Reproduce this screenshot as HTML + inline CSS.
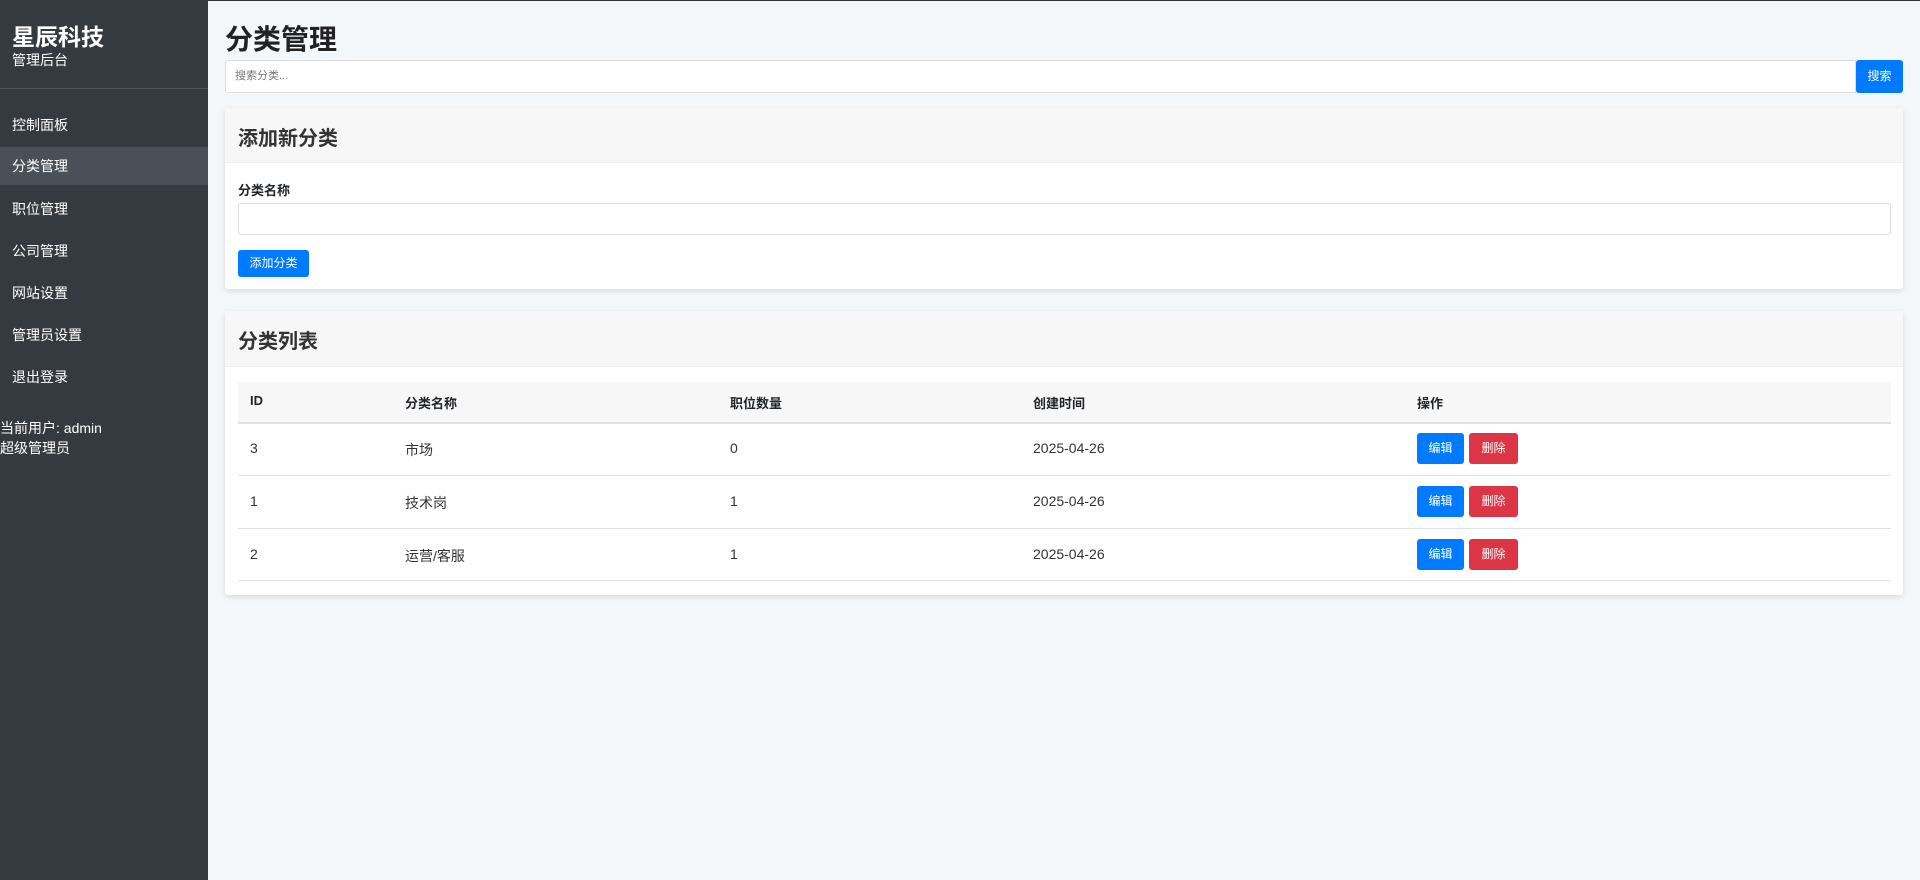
<!DOCTYPE html>
<html><head><meta charset="utf-8"><style>
*{box-sizing:border-box;margin:0;padding:0}
body{width:1920px;height:880px;background:#f4f7fa;font-family:"Liberation Sans","Noto Sans CJK SC",sans-serif;color:#212529;position:relative;overflow:hidden}
.a{position:absolute}
.side{left:0;top:0;width:208px;height:880px;background:#343a40;color:#fff}
.nav{left:0;width:208px;height:38px;line-height:38px;padding-left:12px;font-size:14px;color:#fff}
.btn{color:#fff;font-size:12px;text-align:center;border-radius:3px}
.card{background:#fff;box-shadow:0 2px 6px rgba(0,0,0,.12);border-radius:3px}
.hd{background:#f7f7f7;border-bottom:1px solid #eee}
.th{font-size:13px;font-weight:bold;top:393px}
.td{font-size:14px;color:#333}
.line{left:238px;width:1653px;height:1px;background:#dee2e6}
</style></head><body>
<div class="a side">
 <div class="a" style="left:12px;top:18px;font-size:23px;font-weight:bold">星辰科技</div>
 <div class="a" style="left:12px;top:50px;font-size:14px">管理后台</div>
 <div class="a" style="left:0;top:88px;width:208px;height:1px;background:#4b5259"></div>
 <div class="a nav" style="top:106px">控制面板</div>
 <div class="a nav" style="top:147px;background:#495057">分类管理</div>
 <div class="a nav" style="top:190px">职位管理</div>
 <div class="a nav" style="top:232px">公司管理</div>
 <div class="a nav" style="top:274px">网站设置</div>
 <div class="a nav" style="top:316px">管理员设置</div>
 <div class="a nav" style="top:358px">退出登录</div>
 <div class="a" style="left:0;top:418px;font-size:14px;line-height:20px">当前用户: admin<br>超级管理员</div>
</div>
<div class="a" style="left:208px;top:0;width:1712px;height:1px;background:#333"></div>
<div class="a" style="left:225px;top:18px;font-size:28px;font-weight:bold;color:#222">分类管理</div>
<div class="a" style="left:225px;top:60px;width:1631px;height:33px;background:#fff;border:1px solid #ddd;border-radius:3px 0 0 3px;font-size:11px;color:#777;line-height:31px;padding-left:9px">搜索分类...</div>
<div class="a btn" style="left:1856px;top:60px;width:47px;height:33px;line-height:33px;background:#007bff">搜索</div>

<div class="a card" style="left:225px;top:108px;width:1678px;height:181px">
 <div class="a hd" style="left:0;top:0;width:1678px;height:55px"></div>
 <div class="a" style="left:13px;top:14px;font-size:20px;font-weight:bold;color:#333">添加新分类</div>
 <div class="a" style="left:13px;top:72px;font-size:13px;font-weight:bold">分类名称</div>
 <div class="a" style="left:13px;top:95px;width:1653px;height:32px;border:1px solid #ddd;border-radius:3px"></div>
 <div class="a btn" style="left:13px;top:142px;width:71px;height:27px;line-height:27px;background:#007bff">添加分类</div>
</div>

<div class="a card" style="left:225px;top:311px;width:1678px;height:284px">
 <div class="a hd" style="left:0;top:0;width:1678px;height:56px"></div>
 <div class="a" style="left:13px;top:14px;font-size:20px;font-weight:bold;color:#333">分类列表</div>
</div>
<div class="a" style="left:238px;top:382px;width:1653px;height:41px;background:#f7f7f7"></div>
<div class="a line" style="top:422px;height:2px"></div>
<div class="a th" style="left:250px">ID</div>
<div class="a th" style="left:405px">分类名称</div>
<div class="a th" style="left:730px">职位数量</div>
<div class="a th" style="left:1033px">创建时间</div>
<div class="a th" style="left:1417px">操作</div>

<div class="a td" style="left:250px;top:440px">3</div><div class="a td" style="left:405px;top:440px">市场</div><div class="a td" style="left:730px;top:440px">0</div><div class="a td" style="left:1033px;top:440px">2025-04-26</div>
<div class="a btn" style="left:1417px;top:433px;width:47px;height:31px;line-height:31px;background:#007bff">编辑</div><div class="a btn" style="left:1469px;top:433px;width:49px;height:31px;line-height:31px;background:#dc3545">删除</div>
<div class="a line" style="top:475px"></div>

<div class="a td" style="left:250px;top:493px">1</div><div class="a td" style="left:405px;top:493px">技术岗</div><div class="a td" style="left:730px;top:493px">1</div><div class="a td" style="left:1033px;top:493px">2025-04-26</div>
<div class="a btn" style="left:1417px;top:486px;width:47px;height:31px;line-height:31px;background:#007bff">编辑</div><div class="a btn" style="left:1469px;top:486px;width:49px;height:31px;line-height:31px;background:#dc3545">删除</div>
<div class="a line" style="top:528px"></div>

<div class="a td" style="left:250px;top:546px">2</div><div class="a td" style="left:405px;top:546px">运营/客服</div><div class="a td" style="left:730px;top:546px">1</div><div class="a td" style="left:1033px;top:546px">2025-04-26</div>
<div class="a btn" style="left:1417px;top:539px;width:47px;height:31px;line-height:31px;background:#007bff">编辑</div><div class="a btn" style="left:1469px;top:539px;width:49px;height:31px;line-height:31px;background:#dc3545">删除</div>
<div class="a line" style="top:580px"></div>
</body></html>
